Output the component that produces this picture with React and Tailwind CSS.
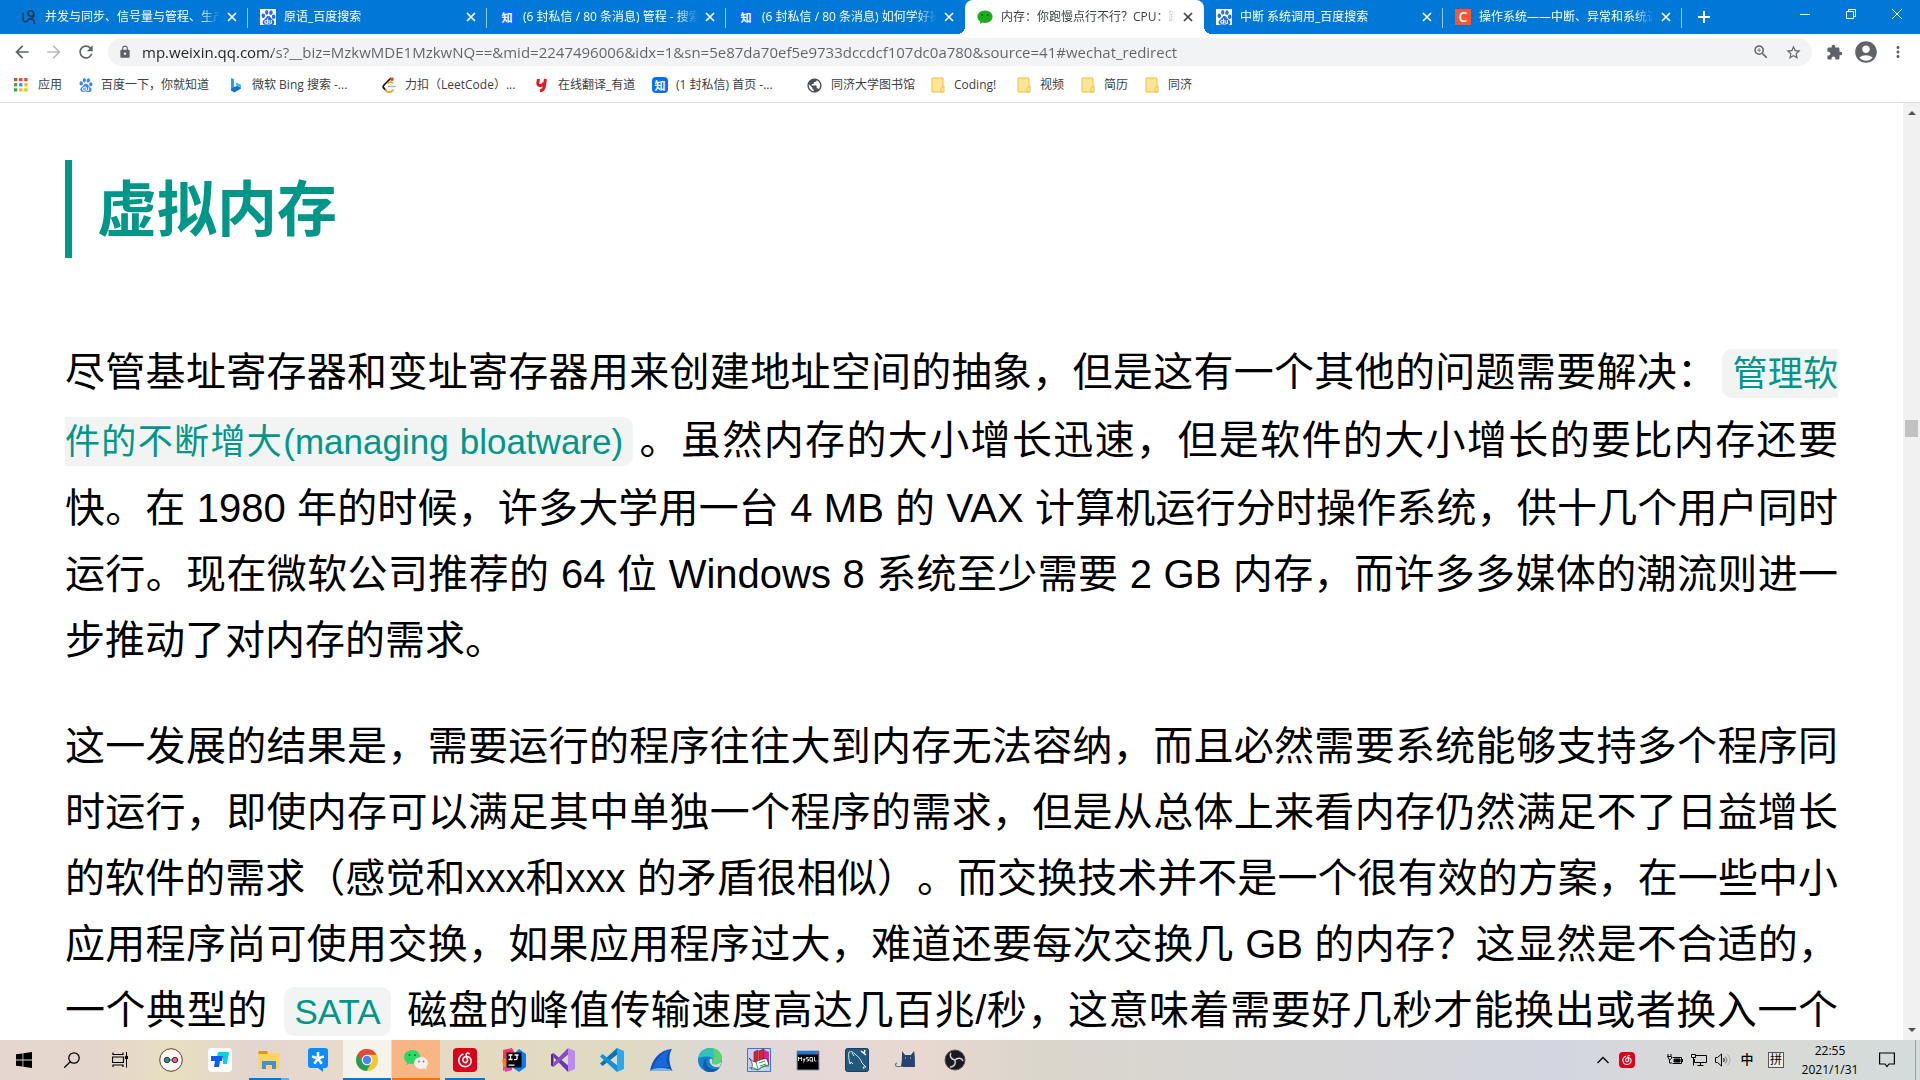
import React from "react";
import { SiBaidu, SiNeteasecloudmusic } from "react-icons/si";
import { MdLock, MdStarBorder, MdZoomIn, MdExtension, MdAccountCircle, MdMoreVert, MdRefresh, MdArrowBack, MdArrowForward, MdPublic } from "react-icons/md";

const UI = "font-['Open_Sans','Noto_Sans_CJK_SC',sans-serif]";

const Baidu = () => (
  <span className="flex size-4 shrink-0 items-center justify-center bg-white text-[#2a6be8]"><SiBaidu size={15} /></span>
);
const BaiduPlain = () => <SiBaidu size={14} color="#3385ff" />;
const Zhihu = () => (
  <span className="flex size-4 shrink-0 items-center justify-center rounded-sm bg-[#0a6cff] text-[11px] leading-none font-bold text-white">知</span>
);
const Wechat = () => <svg viewBox="0 0 16 16" className="size-4 shrink-0"><path d="M8 1.500c4.200 0 7.600 2.800 7.600 6.300S12.200 14 8 14c-.9 0-1.800-.1-2.600-.4L2.800 15l.5-2.500C1.500 11.400.4 9.700.4 7.800.4 4.300 3.800 1.500 8 1.500z" fill="#1aad19" /><circle cx="5.300" cy="6" r="1.100" fill="#063" /><circle cx="10.700" cy="6" r="1.100" fill="#063" /></svg>;
const Person = () => <svg viewBox="0 0 16 16" className="size-4 shrink-0" fill="none" stroke="#26384f" strokeWidth="1.600"><path d="M12.500 5.500a2.800 2.800 0 1 1-1-3.300c1.500 1.500 1.600 4.300.3 6.300-1 1.500-3.300 2-5.300 1.700" /><path d="M2 3.500v6c0 2.500 1.500 3.800 3 3.300S7.500 9.800 9.500 9.800c2.500 0 4 2.500 4 5.200" /></svg>;
const CLogo = () => <span className="flex size-4 shrink-0 items-center justify-center bg-[#fc5531] text-sm leading-none font-semibold text-white">C</span>;
const Bing = () => <svg viewBox="0 0 16 16" className="size-4"><path d="M3 1l3 1v9l-3 3z" fill="#2a9df4" /><path d="M3 12l3-2 3-1-1.500-3.500L13 8v3.500L6.500 15.500 3 13.500z" fill="#1473d8" /><path d="M7.500 5.500L13 8v3L9 9z" fill="#35c5f0" /></svg>;
const Leet = () => <svg viewBox="0 0 16 16" className="size-4" fill="none" strokeLinecap="round" strokeWidth="1.700"><path d="M9.500 1.500L3 8c-1 1-1 2.300 0 3.300l2 2" stroke="#111" /><path d="M12 13l-1.500 1.300c-1.300 1-3.500 1-4.700 0L4.500 13M7 6c1.500-1.200 3.200-1.200 4.500 0" stroke="#f0a020" /><path d="M7.500 9.500H14" stroke="#b3b1b0" /><circle cx="11" cy="2.200" r="1" fill="#e34b3a" stroke="#e34b3a" /></svg>;
const Youdao = () => <svg viewBox="0 0 16 16" className="size-4" fill="none" stroke="#e21b22" strokeWidth="3"><path d="M4.500 2l-.7 4c-.2 2 1 2.800 3 2.500 2-.2 3-1.500 3.300-3M11.500 2l-1.300 8c-.4 2.500-1.700 3.600-4.200 3.800" /></svg>;
const Folder = () => <svg viewBox="0 0 16 16" className="size-4"><path d="M2 1h11v14H2z" fill="#ffe596" stroke="#e8c04c" /><path d="M11 11l3-2v6h-3z" fill="#ffe596" stroke="#e8c04c" /></svg>;
const Apps = () => <svg viewBox="0 0 15 15" className="size-[14px]">{["#ea4335", "#ea4335", "#ea4335", "#34a853", "#4285f4", "#fbbc05", "#34a853", "#fbbc05", "#fbbc05"].map((c, i) => <rect key={i} x={(i % 3) * 5.5} y={Math.floor(i / 3) * 5.5} width="3.500" height="3.500" fill={c} />)}</svg>;
const Close = () => <svg viewBox="0 0 10 10" className="size-2.5" stroke="currentColor" strokeWidth="1.700"><path d="M1 1l8 8M9 1L1 9" /></svg>;
const Plus = () => <svg viewBox="0 0 12 12" className="size-3" stroke="currentColor" strokeWidth="2"><path d="M6 0v12M0 6h12" /></svg>;

const tabs = [
  { t: "并发与同步、信号量与管程、生产者", i: <Person /> },
  { t: "原语_百度搜索", i: <Baidu /> },
  { t: "(6 封私信 / 80 条消息) 管程 - 搜索结果", i: <Zhihu /> },
  { t: "(6 封私信 / 80 条消息) 如何学好操作", i: <Zhihu /> },
  { t: "内存：你跑慢点行不行？CPU：跑慢点", i: <Wechat />, active: true },
  { t: "中断 系统调用_百度搜索", i: <Baidu /> },
  { t: "操作系统——中断、异常和系统调用", i: <CLogo /> },
];

function Tab({ t, i, active, line }) {
  return (
    <div className={"relative flex h-full min-w-0 flex-[0_1_239px] items-center pr-2 pl-3 " + (active ? "rounded-t-lg bg-white text-[#3c4043]" : "text-white")}>
      {active && (
        <>
          <span className="absolute bottom-0 -left-2 size-2 bg-[radial-gradient(circle_at_0_0,#0078d7_8px,#fff_8px)]" />
          <span className="absolute -right-2 bottom-0 size-2 bg-[radial-gradient(circle_at_100%_0,#0078d7_8px,#fff_8px)]" />
        </>
      )}
      {i}
      <button className="ml-2 min-w-0 flex-1 overflow-hidden text-left text-xs leading-5 whitespace-nowrap [mask-image:linear-gradient(to_right,#000_88%,transparent)]">{t}</button>
      <button aria-label="关闭标签页" className="ml-1 flex size-4 items-center justify-center"><Close /></button>
      {line && <span className="absolute top-2 right-0 h-5 w-px bg-white/60" />}
    </div>
  );
}

const marks = [
  ["百度一下，你就知道", <BaiduPlain />, "w-[149px]"],
  ["微软 Bing 搜索 -...", <Bing />, "w-[153px]"],
  ["力扣（LeetCode）...", <Leet />, "w-[153px]"],
  ["在线翻译_有道", <Youdao />, "w-[118px]"],
  ["(1 封私信) 首页 -...", <Zhihu />, "w-[154px]"],
  ["同济大学图书馆", <MdPublic size={17} color="#4b4f54" />, "w-[124px]"],
  ["Coding!", <Folder />, "w-[86px]"],
  ["视频", <Folder />, "w-16"],
  ["简历", <Folder />, "w-16"],
  ["同济", <Folder />, "w-16"],
];

const Netease = ({ small }) => (
  <span className={"flex items-center justify-center rounded bg-[#dd001b] text-[#dd001b] " + (small ? "size-4" : "size-6")}>
    <span className={"flex items-center justify-center rounded-full bg-white " + (small ? "size-3" : "size-5")}>
      <SiNeteasecloudmusic size={small ? 16 : 24} className="shrink-0" />
    </span>
  </span>
);

const S = ({ children, ...p }) => <svg viewBox="0 0 24 24" className="size-6" fill="none" {...p}>{children}</svg>;

const apps = [
  ["Flickr", <S><circle cx="12" cy="12" r="11.300" fill="#fdf5ee" stroke="#5a4038" /><path d="M5 12h14" stroke="#402c2c" /><circle cx="8" cy="12" r="2.700" fill="#169aa8" stroke="#402c2c" /><circle cx="16" cy="12" r="2.700" fill="#f0609a" stroke="#402c2c" /></S>],
  ["腾讯会议", <S><rect width="24" height="24" rx="4" fill="#fff" /><path d="M10 4h11l-2 12h-4V9H9z" fill="#00d5e0" /><path d="M3 8h12l-1 5h-2l-1 6H6l1-6H3z" fill="#0a5cf5" /></S>],
  ["文件资源管理器", <S><path d="M1.500 3h9l1 2H22.500v16h-21z" fill="#ffd35c" /><path d="M1.500 3h9v3h-9z" fill="#d99b13" /><path d="M5 13h14v8h-4v-4H9v4H5z" fill="#3b91dc" /></S>, "files"],
  ["TIM", <S><path d="M5 0h14q3 0 3 3v14q0 3-3 3h-2v4l-5-4H5q-3 0-3-3V3q0-3 3-3z" fill="#0a8cff" /><path d="M12 10.500V4M12 10.500L6 8.500M12 10.500L18 8.500M12 10.500L8.300 15.700M12 10.500L15.700 15.700" stroke="#fff" strokeWidth="2.600" /></S>],
  ["Chrome", <S><circle cx="12" cy="12" r="11" fill="#f9c62b" /><path d="M2.500 6.500A11 11 0 0 0 11.500 23l5-8.500L12 12z" fill="#1fa05a" /><path d="M12 12L7.300 14.700 2.500 6.500A11 11 0 0 1 21.600 6.700H12z" fill="#dd4b3e" /><circle cx="12" cy="12" r="5.300" fill="#fff" /><circle cx="12" cy="12" r="4.200" fill="#4a86ee" /></S>, "chrome"],
  ["微信", <S><path d="M8.500 2C4 2 0 5 0 9c0 2.300 1.200 4.200 3 5.500L2.300 17 5.500 15.500c1 .3 2 .5 3 .5 4.700 0 7.800-3 7.800-7S13 2 8.500 2z" fill="#2bd964" /><ellipse cx="17" cy="15" rx="7" ry="6" fill="#f1f1f1" /><path d="M19 19l3.500 3-.5-4z" fill="#f1f1f1" /><g fill="#147338"><circle cx="5.500" cy="7" r="1" /><circle cx="11" cy="7" r="1" /></g><g fill="#777"><circle cx="15" cy="13.500" r=".9" /><circle cx="19.500" cy="13.500" r=".9" /></g></S>, "wechat"],
  ["网易云音乐", <Netease />, "music"],
  ["IntelliJ IDEA", <S><path d="M1 2l9-2 4 8-6 11-7 4z" fill="#fc3168" /><path d="M0 12l8-4v11l-6 3z" fill="#fd7c32" /><path d="M2 19l8-2v5l-7 2z" fill="#e83fa8" /><path d="M13 5l4-4 7 5v13l-7 5-7-5z" fill="#087cfa" /><path d="M4.500 4.500h15v15h-15z" fill="#000" /><path d="M6.500 7h4M8.500 7v4.500M6.500 11.500h4M12.500 7h4M15 7v3.500q0 1.200-1.500 1.200h-1.500M6.500 17.200h6" stroke="#fff" strokeWidth="1.300" /></S>],
  ["Visual Studio", <S><path d="M0 6.500L2.500 5v14L0 17.500z" fill="#52218a" /><path d="M2.500 5L17 17.500V24L2.500 9z" fill="#6b34ae" /><path d="M2.500 19L17 6.500V0L2.500 15z" fill="#854cc7" /><path d="M17 0l7 3v18l-7 3z" fill="#b98af0" /></S>],
  ["Visual Studio Code", <S><path d="M17 0L0 15.500 2.500 18 18 6z" fill="#0a74b8" /><path d="M17 24L0 8.500 2.500 6 18 18z" fill="#1590d8" /><path d="M17 0l7 3v18l-7 3V0z" fill="#28a8ee" /></S>],
  ["Wireshark", <S><path d="M1 23C3 12 10 2 23 1c-4 6-3 15 .5 22z" fill="#0d4fc0" /><path d="M4 20C7 11 13 4 21 2c-5 6-4 12-1 17z" fill="#1f7ae6" opacity=".6" /><path d="M1 23c1-2 5-3 11-3s10 1 11.500 3z" fill="#7fb0e8" /></S>],
  ["Microsoft Edge", <S><circle cx="12" cy="12" r="12" fill="#1381d0" /><path d="M.2 11C1 4 6 0 12 0c7 0 12 5 12 10.500 0 4-3 6-6.500 6-2.500 0-3.500-1-3-2 1-1.500.7-6-4.500-6C6 8.500 1 9 .2 11z" fill="#35c1b4" /><path d="M14 0c6 1 10 5 10 10.500 0 4-3 6-6.500 6-2.500 0-3.500-1-3-2C18 9 17 4 14 0z" fill="#5bd66b" /><path d="M8 13c0 5 4 9 10 8 2-.3 3-1 4-2-3 5-9 6-13 4.500C3 21 4 12 10 9.500 8.500 11 8 12 8 13z" fill="#0f5ba8" /><path d="M11.500 12c.5-1.500 2-1.500 2.800-.5.700 1.200 0 2.500-.3 3 0 1.500 2 2.500 5 1.800 2-.4 3.500-1.300 4.500-2.500-.3 2-1 3.700-2 5-4 1.500-10-1-10-6.800z" fill="#dcd9d6" /></S>],
  ["词典", <S><path d="M.5.500h23v23H.5z" fill="#c9d0f5" stroke="#3477d4" /><path d="M7 4l4-2v10l-4 2zM12 3l5-2v12h-5z" fill="#e0232e" stroke="#6b1010" strokeWidth=".6" /><path d="M17 2l5 2v13l-5-3z" fill="#d02a9a" /><path d="M2 10c3 3 5 4 7 4 3-2 8-4 11-3l2 6c-4 0-8 2-11 5-3-1-5-1-7-1 2-3 2-6-2-11z" fill="#fff" stroke="#111" strokeWidth=".6" /><path d="M2 20c3-1 6 0 9 2 3-3 6-4 11-4M9 14l2 7M12 15l6-2M13 18l6-2" stroke="#1a9445" strokeWidth=".9" /></S>],
  ["MySQL Command Line", <S><path d="M1 3h22v19H1z" fill="#000" stroke="#8a97a8" /><path d="M1 3h22v3.500H1z" fill="#1f77d0" /><path d="M19 4h3v2h-3z" fill="#e04040" /><path d="M2.500 13V9l1.500 2 1.500-2v4M7 10.500l1 2 1-2-1.500 4M12.500 9.500h-2v1.500h2v2h-2M14 9.500h2.500V13H14zM16 13l1 1M18.500 9v4h2M22 13h.5" stroke="#e8e8e8" strokeWidth=".9" /></S>],
  ["MySQL Workbench", <S><rect x=".500" y=".500" width="23" height="23" rx="2" fill="#23577d" stroke="#153e60" /><path d="M8 16l-2-2-1 2C4 12 3 7 4 4c2-1 4 0 6 2 4 3 6 6 7 9l4 4h-3l1 2M7 5l2 3" stroke="#dce8f0" /><path d="M16 3l5 4M20 2l-1 3" stroke="#fff" strokeWidth="1.500" /></S>],
  ["Clash", <S><path d="M8 3l3 4h6l3-4c1 4 1 11 1 16H9L7 18c1-4 1-9 1-15z" fill="#27426c" /><path d="M9 18.500H3c-2-.5-2-3 0-3.500" stroke="#5f7190" strokeWidth="1.200" /><path d="M11 10h1M16 10h1" stroke="#dce" /></S>],
  ["OBS Studio", <S><circle cx="12" cy="12" r="10" fill="#1c1a1f" stroke="#555" /><path d="M12 12c-4-1-6-4-4-7M12 12c3-3 7-2 8 1M12 12c1 4-1 7-5 7" stroke="#d0d0d0" strokeWidth="1.500" /></S>],
];

function TaskApp({ name, icon, kind }) {
  return (
    <button aria-label={name} className={"relative flex h-10 w-12 items-center justify-center " + (kind === "chrome" ? "bg-[#f6f2ec]" : kind === "wechat" ? "bg-[#f9b583]" : "")}>
      {icon}
      {(kind === "files" || kind === "music") && <span className={"absolute inset-x-1 bottom-0 h-0.5 " + (kind === "files" ? "bg-[linear-gradient(to_right,#0078d7_80%,#66aee8_80%)]" : "bg-[#0078d7]")} />}
      {kind === "chrome" && <span className="absolute inset-x-0 bottom-0 h-0.5 bg-[#0078d7]" />}
      {kind === "wechat" && <span className="absolute inset-x-0 bottom-0 h-0.5 bg-[#ff7200]" />}
    </button>
  );
}

const Code = ({ children }) => <code className="mx-[5px] rounded-[10px] bg-[#f2f4f4] px-2.5 py-[5px] font-['Liberation_Sans','Noto_Sans_CJK_SC',sans-serif] text-[35px] leading-[66px] text-[#009688]">{children}</code>;

export default function App() {
  return (
    <div lang="zh-CN" className={"flex h-screen flex-col overflow-hidden bg-white " + UI}>
      <header className="shrink-0">
        <div className="flex h-[34px] bg-[#0078d7] pl-[9px]">
          {tabs.map((t, n) => <Tab key={n} {...t} line={!t.active && n !== 3} />)}
          <button aria-label="新标签页" className="flex w-11 items-center justify-center text-white"><Plus /></button>
          <div className="ml-auto flex h-7 text-white">
            <button aria-label="最小化" className="flex w-[46px] items-center justify-center"><svg className="size-2.5" viewBox="0 0 10 10" stroke="currentColor"><path d="M0 5.500h10" /></svg></button>
            <button aria-label="还原" className="flex w-[46px] items-center justify-center"><svg className="size-2.5" viewBox="0 0 10 10" stroke="currentColor" fill="none"><path d="M.5 2.500h7v7h-7zM2.500 2.500v-2h7v7h-2" /></svg></button>
            <button aria-label="关闭" className="flex w-[46px] items-center justify-center"><svg className="size-2.5" viewBox="0 0 10 10" stroke="currentColor"><path d="M0 0l10 10M10 0L0 10" /></svg></button>
          </div>
        </div>
        <div className="flex h-9 items-center pr-[13px] pl-3 text-[#5f6368]">
          <button aria-label="后退" className="w-8"><MdArrowBack size={20} /></button>
          <button aria-label="前进" className="w-8 text-[#babcbe]"><MdArrowForward size={20} /></button>
          <button aria-label="重新加载" className="w-8"><MdRefresh size={20} /></button>
          <div className="flex h-7 flex-1 items-center rounded-full bg-[#f1f3f4] pr-2.5 pl-2.5">
            <MdLock size={14} />
            <input aria-label="地址" readOnly className="ml-2.5 min-w-0 flex-1 bg-[linear-gradient(to_right,#202124_130px,#5f6368_130px)] bg-clip-text pb-px text-[15px] leading-5 text-transparent outline-none" value="mp.weixin.qq.com/s?__biz=MzkwMDE1MzkwNQ==&mid=2247496006&idx=1&sn=5e87da70ef5e9733dccdcf107dc0a780&source=41#wechat_redirect" />
            <button aria-label="缩放" className="mr-[15px]"><MdZoomIn size={18} /></button>
            <button aria-label="收藏"><MdStarBorder size={17} /></button>
          </div>
          <button aria-label="扩展程序" className="ml-3.5"><MdExtension size={17} /></button>
          <button aria-label="用户" className="ml-2.5"><MdAccountCircle size={26} /></button>
          <button aria-label="更多" className="ml-2.5"><MdMoreVert size={18} /></button>
        </div>
        <nav className="flex h-[33px] items-center border-b border-[#dadce0] pb-0.5 pl-3.5 text-xs text-[#3c4043]">
          <a href="#apps" className="flex w-[65px] items-center gap-2.5"><Apps />应用</a>
          {marks.map(([t, i, w]) => <a key={t} href="#bookmark" className={"flex shrink-0 items-center gap-2 whitespace-nowrap " + w}>{i}{t}</a>)}
        </nav>
      </header>

      <div className="flex min-h-0 flex-1">
        <main className="min-w-0 flex-1 overflow-hidden pt-[57px] pr-[65px] pl-[65px] font-['Liberation_Sans','Noto_Sans_CJK_SC',sans-serif] text-[40px] leading-[66px] text-black [text-spacing-trim:space-all]">
          <h1 className="mb-[81px] flex h-[98px] items-center border-l-[7px] border-[#009688] pt-1 pl-[25px] text-6xl font-bold text-[#009688]">虚拟内存</h1>
          <p className="mb-10 text-justify">
            尽管基址寄存器和变址寄存器用来创建地址空间的抽象，但是这有一个其他的问题需要解决：<Code>管理软件的不断增大(managing bloatware)</Code>。虽然内存的大小增长迅速，但是软件的大小增长的要比内存还要快。在 1980 年的时候，许多大学用一台 4 MB 的 VAX 计算机运行分时操作系统，供十几个用户同时运行。现在微软公司推荐的 64 位 Windows 8 系统至少需要 2 GB 内存，而许多多媒体的潮流则进一步推动了对内存的需求。
          </p>
          <p className="text-justify [text-align-last:justify]">
            这一发展的结果是，需要运行的程序往往大到内存无法容纳，而且必然需要系统能够支持多个程序同时运行，即使内存可以满足其中单独一个程序的需求，但是从总体上来看内存仍然满足不了日益增长的软件的需求（感觉和xxx和xxx 的矛盾很相似）。而交换技术并不是一个很有效的方案，在一些中小应用程序尚可使用交换，如果应用程序过大，难道还要每次交换几 GB 的内存？这显然是不合适的，一个典型的 <Code>SATA</Code> 磁盘的峰值传输速度高达几百兆/秒，这意味着需要好几秒才能换出或者换入一个
          </p>
        </main>
        <div className="flex w-[17px] shrink-0 flex-col items-center bg-[#f1f1f1] py-2">
          <svg viewBox="0 0 8 4" className="h-1 w-2"><path d="M0 4l4-4 4 4z" fill="#505050" /></svg>
          <div className="mt-[305px] h-[17px] w-[13px] bg-[#c1c1c1]" />
          <svg viewBox="0 0 8 4" className="mt-auto h-1 w-2"><path d="M0 0h8l-4 4z" fill="#505050" /></svg>
        </div>
      </div>

      <footer className="flex h-10 shrink-0 items-center bg-[linear-gradient(to_right,#e6d6d0_0%,#e4d6cc_5%,#e8dfc0_9%,#e3d5cf_13%,#e9dace_18%,#e3dabf_26%,#e0dac4_33%,#dcd8d4_37%,#e4d8d8_42%,#e8d8d0_48%,#dbd6cc_54%,#d3d6e0_81%,#d9dad5_91%,#d3dcdc_100%)] text-black">
        <button aria-label="开始" className="flex w-12 justify-center"><svg viewBox="0 0 16 16" className="size-4"><path d="M0 2.300L6.500 1.400v6.200H0zM7.300 1.300L16 0v7.600H7.300zM0 8.400h6.500v6.200L0 13.700zM7.300 8.400H16V16l-8.700-1.300z" /></svg></button>
        <button aria-label="搜索" className="flex w-12 justify-center"><svg viewBox="0 0 16 16" className="size-4" fill="none" stroke="#000" strokeWidth="1.300"><circle cx="10" cy="6" r="5.200" /><path d="M6.300 9.700L.3 15.700" /></svg></button>
        <button aria-label="任务视图" className="mr-[3px] flex w-12 justify-center"><svg viewBox="0 0 16 16" className="size-4" fill="none" stroke="#000"><path d="M1 .5v2h10v-2M1 15v-2h10v2M.5 5h11v5.500H.5z" strokeWidth="1.200" /><path d="M14.500 0v15.500" /><path d="M13 4h3v3h-3z" fill="#000" stroke="none" /></svg></button>
        <div className="flex gap-px">
          {apps.map(([name, icon, kind]) => <TaskApp key={name} name={name} icon={icon} kind={kind} />)}
        </div>
        <div className="ml-auto flex h-full items-center">
          <button aria-label="显示隐藏的图标" className="flex w-6 justify-center"><svg viewBox="0 0 12 8" className="h-2 w-3" fill="none" stroke="#000" strokeWidth="1.300"><path d="M.5 7L6 1.500 11.500 7" /></svg></button>
          <button aria-label="网易云音乐托盘" className="mr-6 flex w-6 justify-center"><Netease small /></button>
          <button aria-label="电池" className="flex w-6 justify-center"><svg viewBox="0 0 16 16" className="size-4" fill="none" stroke="#000"><path d="M5.500 5.500h9v6h-9M15.500 7v3" /><path d="M7 7h6v3H7z" fill="#000" /><path d="M1 2v2M4 2v2M.5 4.500h4v2l-2 1.500zM2.500 8v3H5" /></svg></button>
          <button aria-label="网络" className="flex w-6 justify-center"><svg viewBox="0 0 16 16" className="size-4" fill="none" stroke="#000"><path d="M5 3.500h10.500v7H3.500V7M9.500 10.500v3M6.500 13.500h6M.5 2.500h4v3h-4zM2.500 5.500v8" /></svg></button>
          <button aria-label="音量" className="flex w-6 justify-center"><svg viewBox="0 0 16 16" className="size-4" fill="none" stroke="#000"><path d="M.5 5.500h2l4-3.500v12l-4-3.500h-2zM8.500 6q1.500 2 0 4" /><path d="M10.500 4.500q3 3.500 0 7" stroke="#777" /><path d="M12.500 2.500q5 5.500 0 11" stroke="#aaa" /></svg></button>
          <button className="w-6 text-center text-[13px] font-medium">中</button>
          <button className="mr-[11px] ml-[9px] flex size-4 items-center justify-center border border-[#555] bg-white/50 text-xs leading-none">拼</button>
          <button className="w-[70px] text-center text-xs leading-[19px]">22:55<br />2021/1/31</button>
          <button aria-label="通知" className="mr-5 ml-[14px]"><svg viewBox="0 0 16 16" className="size-4" fill="none" stroke="#000" strokeWidth="1.200"><path d="M.6 1h14.800v11H10l-2 2.500L6 12H.6z" /></svg></button>
          <span className="mr-1 h-full w-px bg-[#9ba3a6]" />
        </div>
      </footer>
    </div>
  );
}
